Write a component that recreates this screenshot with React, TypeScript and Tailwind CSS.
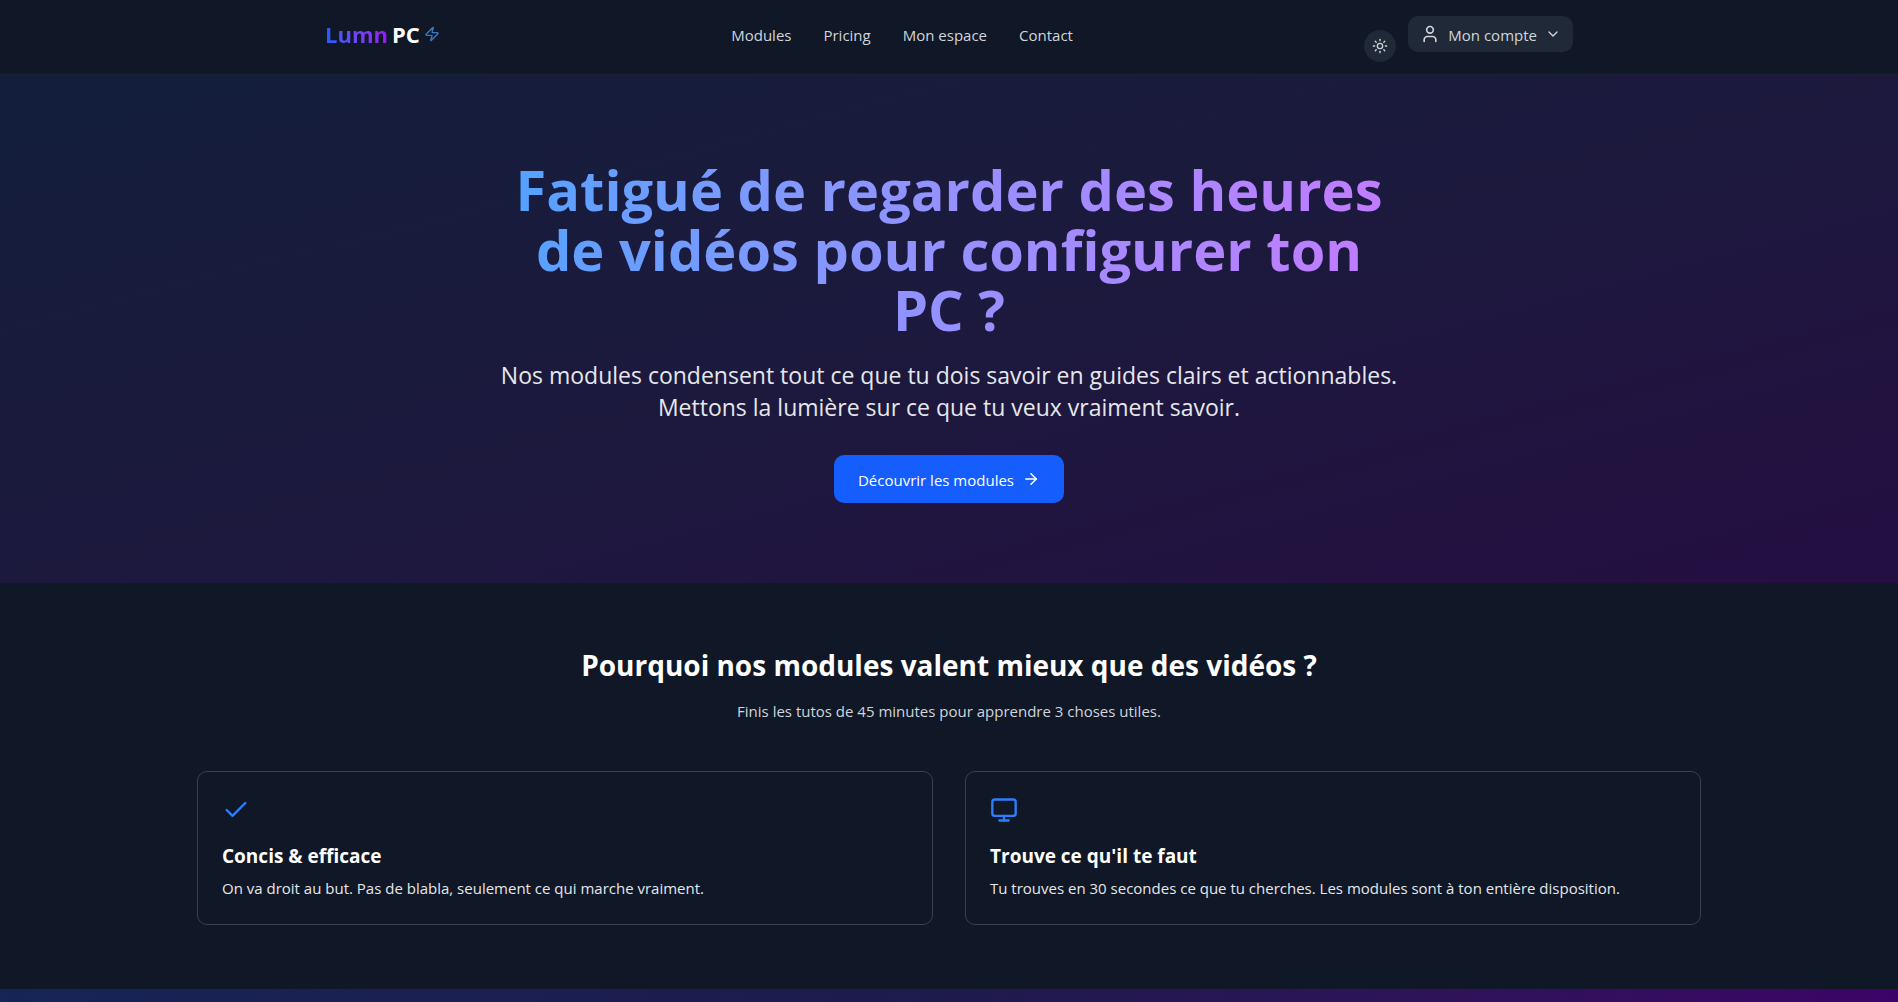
import { ArrowRight, Check, ChevronDown, Monitor, Sun, User, Zap } from "lucide-react";

const links = ["Modules", "Pricing", "Mon espace", "Contact"];

const features = [
  {
    icon: Check,
    title: "Concis & efficace",
    text: "On va droit au but. Pas de blabla, seulement ce qui marche vraiment.",
  },
  {
    icon: Monitor,
    title: "Trouve ce qu'il te faut",
    text: "Tu trouves en 30 secondes ce que tu cherches. Les modules sont à ton entière disposition.",
  },
];

function Header() {
  return (
    <header className="border-b border-gray-800/70 bg-[#101726]">
      <div className="mx-auto flex w-full max-w-7xl items-start justify-between px-4 pt-4 pb-3">
        <a href="#" className="flex h-9 items-center gap-1 text-[22px] font-bold text-white">
          <span className="flex gap-1">
            <span className="bg-gradient-to-r from-blue-600 to-purple-600 bg-clip-text text-transparent">Lumn</span>
            <span>PC</span>
          </span>
          <Zap className="size-4 text-blue-400 opacity-70" />
        </a>
        <nav className="flex h-9 items-center gap-8 pt-0.5 text-[15px] text-gray-300">
          {links.map((label) => (
            <a key={label} href="#">
              {label}
            </a>
          ))}
        </nav>
        <div className="flex items-start gap-3 text-gray-300">
          <button type="button" aria-label="Changer de thème" className="mt-[14px] flex size-8 items-center justify-center rounded-full bg-[#1f2937]">
            <Sun className="size-4" />
          </button>
          <button type="button" className="flex h-9 items-center gap-2 rounded-[10px] bg-[#1f2937] px-3 text-[15px]">
            <User className="size-5" />
            <span className="pt-0.5">Mon compte</span>
            <ChevronDown className="size-4" />
          </button>
        </div>
      </div>
    </header>
  );
}

function Hero() {
  return (
    <section className="bg-gradient-to-br from-[#121e3c] via-[#1c193d] to-[#240e42] px-4 pt-21 pb-20 text-center">
      <div className="mx-auto max-w-4xl">
        <h1 className="mb-5 bg-gradient-to-r from-blue-400 to-purple-400 bg-clip-text text-[56px] leading-[60px] font-bold text-transparent">
          Fatigué de regarder des heures de vidéos pour configurer ton PC ?
        </h1>
        <p className="-mx-4 mb-8 text-[23px] leading-8 text-gray-200">
          Nos modules condensent tout ce que tu dois savoir en guides clairs et actionnables. Mettons la lumière sur ce
          que tu veux vraiment savoir.
        </p>
        <a href="#" className="mx-auto flex h-12 w-fit items-center gap-2 rounded-[10px] bg-blue-600 px-6 text-[15px] text-white">
          <span className="pt-0.5">Découvrir les modules</span>
          <ArrowRight className="size-[18px]" />
        </a>
      </div>
    </section>
  );
}

function Features() {
  return (
    <section className="mx-auto w-full max-w-screen-2xl px-4 py-16">
      <h2 className="mb-4 text-center text-[28px] leading-9 font-bold text-white">
        Pourquoi nos modules valent mieux que des vidéos ?
      </h2>
      <p className="mb-12 text-center text-[15px] leading-6 text-gray-300">
        Finis les tutos de 45 minutes pour apprendre 3 choses utiles.
      </p>
      <div className="grid gap-8 md:grid-cols-2">
        {features.map(({ icon: Icon, title, text }) => (
          <article key={title} className="rounded-[10px] border border-gray-700 p-6">
            <Icon className="mb-4 size-7 text-blue-500" />
            <h3 className="mb-1 text-[19px] leading-8 font-bold text-white">{title}</h3>
            <p className="text-[15px] leading-6 text-gray-200">{text}</p>
          </article>
        ))}
      </div>
    </section>
  );
}

export default function App() {
  return (
    <div className="flex h-screen flex-col overflow-hidden bg-[#101726] font-['Segoe_UI','Open_Sans','Noto_Sans',sans-serif]">
      <Header />
      <main className="flex grow flex-col">
        <Hero />
        <Features />
        <section className="grow bg-gradient-to-r from-blue-950 via-indigo-950 to-purple-950" />
      </main>
    </div>
  );
}
